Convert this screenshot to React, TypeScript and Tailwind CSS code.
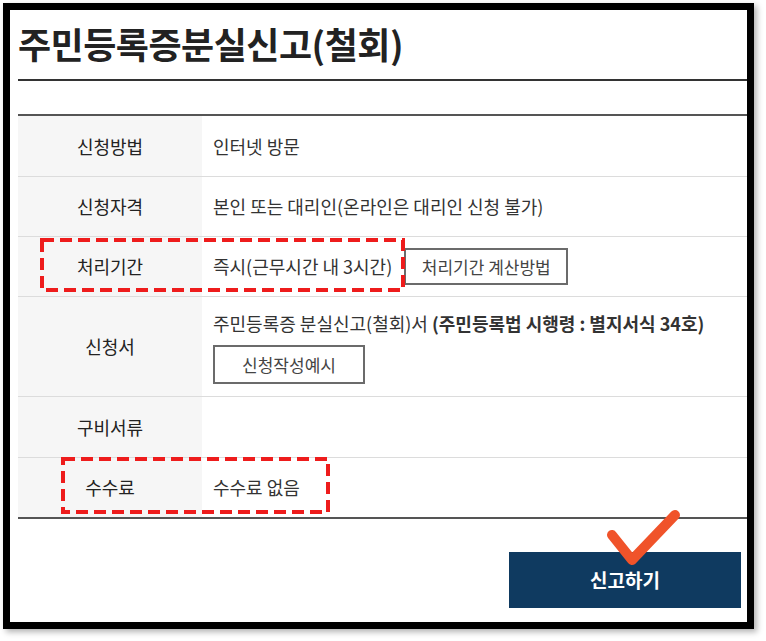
import React from "react";

const font = { fontFamily: '"Noto Sans CJK KR", "Noto Sans", sans-serif' };

type Row = { label: string; height: string; body?: React.ReactNode };

function OutlineButton({ children, className }: { children: React.ReactNode; className: string }) {
  return (
    <span
      className={`inline-flex items-center justify-center border-2 border-[#6b6b6b] text-[17px] text-[#444] ${className}`}
    >
      {children}
    </span>
  );
}

const rows: Row[] = [
  { label: "신청방법", height: "h-[60px]", body: "인터넷 방문" },
  { label: "신청자격", height: "h-[60px]", body: "본인 또는 대리인(온라인은 대리인 신청 불가)" },
  {
    label: "처리기간",
    height: "h-[60px]",
    body: (
      <div className="flex items-center gap-[12px]">
        <span>즉시(근무시간 내 3시간)</span>
        <OutlineButton className="w-[164px] h-[37px]">처리기간 계산방법</OutlineButton>
      </div>
    ),
  },
  {
    label: "신청서",
    height: "h-[100px]",
    body: (
      <div className="flex flex-col items-start gap-[8px] pt-[1px]">
        <span>
          주민등록증 분실신고(철회)서 <b className="font-bold">(주민등록법 시행령 : 별지서식 34호)</b>
        </span>
        <OutlineButton className="w-[152px] h-[39px]">신청작성예시</OutlineButton>
      </div>
    ),
  },
  { label: "구비서류", height: "h-[61px]" },
  { label: "수수료", height: "h-[60px]", body: "수수료 없음" },
];

// dashed red highlight boxes drawn over the table
function DashBox({ className, w, h }: { className: string; w: number; h: number }) {
  return (
    <svg className={`absolute ${className}`} width={w} height={h}>
      <rect
        x="2"
        y="2"
        width={w - 4}
        height={h - 4}
        fill="none"
        stroke="#ee1c1c"
        strokeWidth="4"
        strokeDasharray="12 6"
      />
    </svg>
  );
}

export default function App() {
  return (
    <div className="relative w-[766px] h-[641px] bg-white overflow-hidden" style={font}>
      <div className="ml-[3px] mt-[3px] w-[751px] h-[626px] border-[7px] border-black bg-white shadow-[3px_3px_6px_rgba(0,0,0,0.3)]">
        <div className="pl-[8px]">
          <div className="h-[71px] flex items-center border-b-2 border-[#333]">
            <h1 className="text-[36px] font-bold text-[#222] tracking-[-0.5px] leading-none pb-[4px]">
              주민등록증분실신고(철회)
            </h1>
          </div>
          <div className="h-[33px]" />
          <div className="border-t-2 border-b-2 border-t-[#555] border-b-[#555] text-[18px] text-[#333]">
            {rows.map((r, i) => (
              <div
                key={r.label}
                className={`flex ${r.height} ${i > 0 ? "border-t border-[#dcdcdc]" : ""}`}
              >
                <div className="w-[184px] shrink-0 bg-[#f6f6f6] flex items-center justify-center text-[#222]">
                  {r.label}
                </div>
                <div className="flex-1 flex items-center pl-[11px]">{r.body}</div>
              </div>
            ))}
          </div>
          <div className="flex justify-end pr-[6px] pt-[33px]">
            <button className="w-[232px] h-[56px] bg-[#0f3a60] text-white text-[19px] font-bold">
              신고하기
            </button>
          </div>
        </div>
      </div>

      <DashBox className="left-[40px] top-[238px]" w={365} h={54} />
      <DashBox className="left-[61px] top-[457px]" w={269} h={57} />

      <svg className="absolute left-[600px] top-[505px]" width="90" height="65" viewBox="0 0 90 65">
        <polyline
          points="12,30 32,55 75,10"
          fill="none"
          stroke="#f0532a"
          strokeWidth="10"
          strokeLinecap="round"
          strokeLinejoin="round"
        />
      </svg>
    </div>
  );
}
